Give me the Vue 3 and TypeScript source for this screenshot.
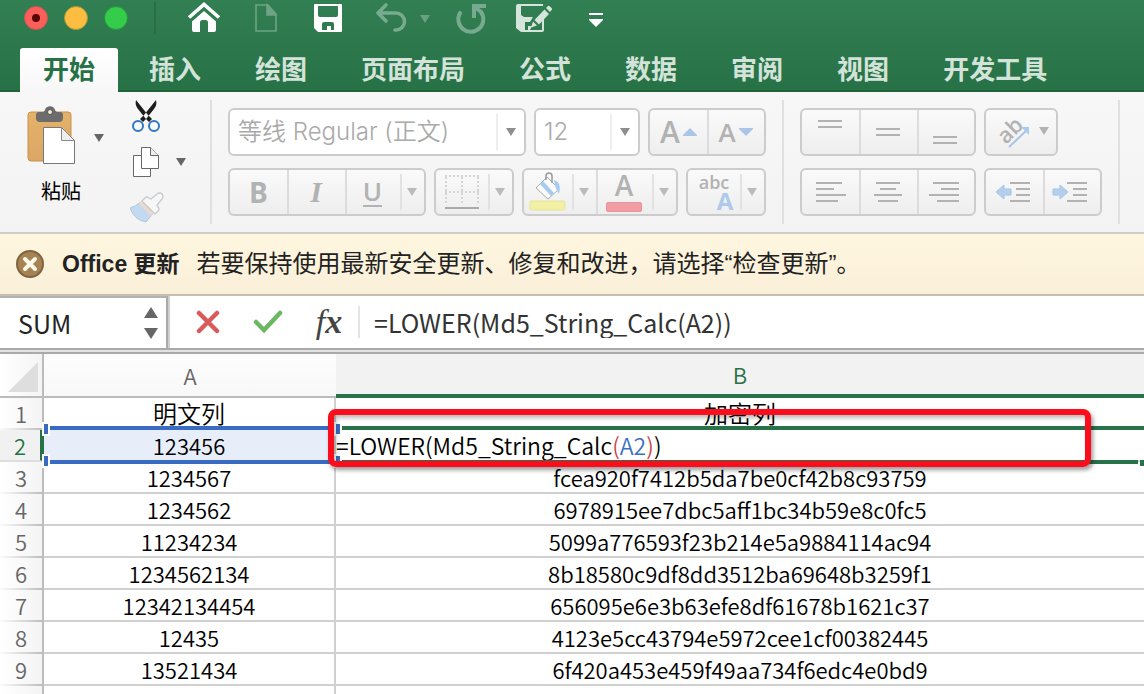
<script setup lang="ts">
import { ref } from 'vue'

interface SheetRow {
  n: number
  plain: string
  hash: string
}

const tabs: string[] = ['开始', '插入', '绘图', '页面布局', '公式', '数据', '审阅', '视图', '开发工具']
const activeTab = ref<string>('开始')

const fontName = ref<string>('等线 Regular (正文)')
const fontSize = ref<string>('12')
const cellName = ref<string>('SUM')
const formula = ref<string>('=LOWER(Md5_String_Calc(A2))')

const rows: SheetRow[] = [
  { n: 1, plain: '明文列', hash: '加密列' },
  { n: 2, plain: '123456', hash: '' },
  { n: 3, plain: '1234567', hash: 'fcea920f7412b5da7be0cf42b8c93759' },
  { n: 4, plain: '1234562', hash: '6978915ee7dbc5aff1bc34b59e8c0fc5' },
  { n: 5, plain: '11234234', hash: '5099a776593f23b214e5a9884114ac94' },
  { n: 6, plain: '1234562134', hash: '8b18580c9df8dd3512ba69648b3259f1' },
  { n: 7, plain: '12342134454', hash: '656095e6e3b63efe8df61678b1621c37' },
  { n: 8, plain: '12435', hash: '4123e5cc43794e5972cee1cf00382445' },
  { n: 9, plain: '13521434', hash: '6f420a453e459f49aa734f6edc4e0bd9' },
  { n: 10, plain: '', hash: '' },
]

const verticalAligns = [
  { label: '顶端对齐', y: 11 },
  { label: '垂直居中', y: 19 },
  { label: '底端对齐', y: 27 },
]

const horizontalAligns = [
  { label: '左对齐', lines: [[14, 40], [14, 32], [14, 44], [14, 36]] },
  { label: '居中', lines: [[16, 40], [20, 36], [14, 42], [18, 38]] },
  { label: '右对齐', lines: [[16, 42], [24, 42], [12, 42], [20, 42]] },
]
</script>

<template>
  <div class="app">
    <header class="top">
      <div class="titlebar">
        <div class="lights">
          <button class="light red" aria-label="关闭"><i></i></button>
          <button class="light yellow" aria-label="最小化"></button>
          <button class="light green" aria-label="缩放"></button>
        </div>
        <span class="title-sep"></span>
        <div class="quick">
          <button aria-label="主页">
            <svg width="40" height="36" fill="#fff"><path d="M5 17.5 20 4.5 35 17.5" fill="none" stroke="#fff" stroke-width="3.6" /><path d="M8 21.5 20 11 32 21.5V30q0 2-2 2h-6V22.500q0-2.500-2.500-2.500h-3q-2.500 0-2.500 2.500V32h-6q-2 0-2-2z" /></svg>
          </button>
          <button aria-label="新建">
            <svg width="40" height="36" fill="none" stroke="#6ea485" stroke-width="1.6"><path d="M10 5h12l8 9v17H10z" /><path d="M21 5v10h9z" fill="#6ea485" /></svg>
          </button>
          <button aria-label="保存">
            <svg width="40" height="36" fill="#fff" fill-rule="evenodd"><path d="M7 4h26q1 0 1 1v26q0 1-1 1H10l-4-4V5q0-1 1-1zM10 6v9q0 2 2 2h16q2 0 2-2V6zM14 30v-6q0-2 2-2h8q2 0 2 2v6h-3v-4h-4v4z" /></svg>
          </button>
          <div class="undo">
            <button aria-label="撤销">
              <svg width="40" height="36" fill="none" stroke="#78aa8f" stroke-width="3.600"><path d="M16 6 8 14l8 8M8 14h18a8.500 8.500 0 0 1 0 17h-1" stroke-linejoin="round" stroke-linecap="round" transform="translate(0 -1)" /></svg>
            </button>
            <button class="narrow" aria-label="撤销选项">
              <svg width="20" height="36" fill="#68a080"><path d="M10 15h10l-5 8z" /></svg>
            </button>
          </div>
          <button aria-label="重做">
            <svg width="40" height="36" fill="none" stroke="#78aa8f" stroke-width="4"><path d="M8 13A12.500 12.500 0 1 0 29 12L24 8" stroke-linecap="round" /><path d="M34 6H22v12" /></svg>
          </button>
          <button aria-label="另存为">
            <svg width="40" height="36"><path d="M4 4h25v2H7v9l3 2h9l-3 5h-5v8h3v-4h4l-2 4h12V20l2-2v12q0 2-2 2H7l-5-4V6q0-2 2-2z" fill="#d5e5dc" /><path d="m20.500 20 10-10.500 4.500 4.500-10 10.500zM32 8l2-2q1-.6 2 .4l1.600 1.600q1 1 0 2L36 12zM19 21.500l4 4-6 2z" fill="#d5e5dc" /></svg>
          </button>
          <button aria-label="自定义快速访问工具栏">
            <svg width="40" height="36" fill="#fff"><path d="M13 13h14v2H13zM13 19h14v1l-7 7-7-7z" /></svg>
          </button>
        </div>
      </div>
      <nav class="tabs" role="tablist">
        <button
          v-for="tab in tabs"
          :key="tab"
          role="tab"
          :aria-selected="tab === activeTab"
          :class="{ active: tab === activeTab }"
          @click="activeTab = tab"
        >{{ tab }}</button>
      </nav>
    </header>

    <section class="ribbon">
      <div class="clipboard">
        <button class="paste">
          <svg width="50" height="60">
            <defs><linearGradient id="board" x2="0" y2="1"><stop stop-color="#e4b26b" /><stop offset="1" stop-color="#dca765" /></linearGradient></defs>
            <rect x="1" y="7" width="43" height="49" rx="3" fill="url(#board)" stroke="#c8914c" />
            <path d="M12 7h4q1 0 2-2c1-5 9-5 10 0q1 2 2 2h3q3 0 3 3v3q0 4-4 4H13q-4 0-4-4v-3q0-3 3-3z" fill="#6c6c6c" />
            <circle cx="23" cy="7" r="2.500" fill="#f3e9db" stroke="#555" />
            <path d="M16.500 22.500h18l13 13v23h-31z" fill="#fff" stroke="#777" />
            <path d="M34.500 22.500v13h13z" fill="#eee" stroke="#888" />
          </svg>
          <span>粘贴</span>
        </button>
        <button class="drop-btn paste-drop" aria-label="粘贴选项"><svg width="10" height="8" fill="#666"><path d="M0 0h10L5 8z" /></svg></button>
        <div class="clip-tools">
          <button aria-label="剪切">
            <svg width="32" height="34"><path d="M6 0c-1 4 0 6 2 9l8 10 3 3 3-3-4-4zM26 0c1 4 0 6-2 9l-8 10-3 3-3-3 4-4z" fill="#1d1d1d" /><g fill="#f8fbff" stroke="#2f77c5" stroke-width="2"><circle cx="8" cy="26" r="5" /><circle cx="24" cy="26" r="5" /></g></svg>
          </button>
          <div class="copy-row">
            <button aria-label="复制">
              <svg width="32" height="34" fill="#fff" stroke="#686868"><path d="M3.500 10.500h17v21h-17z" /><path d="M11.500 2.500h9l8 8v13h-17z" /><path d="M20.500 2.500v8h8" fill="#eee" /></svg>
            </button>
            <button class="drop-btn" aria-label="复制选项"><svg width="10" height="8" fill="#666"><path d="M0 0h10L5 8z" /></svg></button>
          </div>
          <button aria-label="格式刷">
            <svg width="34" height="34"><path d="M0 18q6-2 11-6l12 12q-4 4-7 8Q4 30 0 18z" fill="#c3d9ef" stroke="#b3c7dd" /><path d="m9 14 3-3 12 12-3 3z" fill="#ead9d0" /><path d="m12 11 3-3q2-2 4 0l2 1 6-5q3-2 5 0t0 5l-5 6 1 2q2 2 0 4l-3 3z" fill="#f7f7f7" stroke="#c9c9c9" stroke-width="1.300" /></svg>
          </button>
        </div>
      </div>

      <div class="group">
        <div class="line">
          <div class="combo font-combo">
            <select v-model="fontName" aria-label="字体"><option>等线 Regular (正文)</option></select>
            <svg width="10" height="8" fill="#8e8e8e"><path d="M0 0h10L5 8z" /></svg>
          </div>
          <div class="combo size-combo">
            <select v-model="fontSize" aria-label="字号"><option>12</option></select>
            <svg width="10" height="8" fill="#8e8e8e"><path d="M0 0h10L5 8z" /></svg>
          </div>
          <div class="btns">
            <button class="w59 resize" aria-label="增大字号"><b class="letter big">A</b><svg width="14" height="8"><path d="M7 0 14 7v1H0V7z" fill="#a9c5e8" /></svg></button>
            <button class="w59 resize" aria-label="减小字号"><b class="letter small">A</b><svg width="14" height="8"><path d="M0 0h14v1L7 8 0 1z" fill="#a9c5e8" /></svg></button>
          </div>
        </div>
        <div class="line">
          <div class="btns">
            <button class="w59" aria-label="加粗"><b class="letter bold">B</b></button>
            <button class="w59" aria-label="倾斜"><i class="letter italic">I</i></button>
            <button class="w55" aria-label="下划线"><span class="letter under">U</span></button>
            <button class="drop" aria-label="下划线选项"><svg width="10" height="8"><path d="M0 0h10L5 8z" /></svg></button>
          </div>
          <div class="btns">
            <button class="w52" aria-label="边框">
              <svg width="36" height="36" fill="none"><path d="M1 2h34M1 18h34M2 3v28M18 3v28M34 3v28" stroke="#d4d4d4" stroke-width="2" stroke-dasharray="2 2" /><path d="M1 34h34" stroke="#aaa" stroke-width="2" /></svg>
            </button>
            <button class="drop" aria-label="边框选项"><svg width="10" height="8"><path d="M0 0h10L5 8z" /></svg></button>
          </div>
          <div class="btns">
            <button class="w48" aria-label="填充颜色">
              <svg width="38" height="42"><path d="m7 17 11-11 12 12-11 10z" fill="#fbfbfb" stroke="#aaa" /><path d="m11 13 11 12 3-3L14 10z" fill="#a9cbf0" /><path d="M25 9q8 2 5 14-3-5-4-8z" fill="#a9cbf0" /><path d="M17 9V5q0-3 3-3t3 3v7" fill="none" stroke="#999" stroke-width="1.500" /><rect x="1" y="30" width="35" height="9" rx="1" fill="#f1f0a5" stroke="#e5e49b" /></svg>
            </button>
            <button class="drop" aria-label="填充颜色选项"><svg width="10" height="8"><path d="M0 0h10L5 8z" /></svg></button>
            <button class="w56 split" aria-label="字体颜色">
              <span class="color-letter">A</span><span class="swatch"></span>
            </button>
            <button class="drop" aria-label="字体颜色选项"><svg width="10" height="8"><path d="M0 0h10L5 8z" /></svg></button>
          </div>
          <div class="btns">
            <button class="w52 phonetic" aria-label="显示拼音"><span>abc</span><b>A</b></button>
            <button class="drop" aria-label="拼音选项"><svg width="10" height="8"><path d="M0 0h10L5 8z" /></svg></button>
          </div>
        </div>
      </div>

      <div class="group">
        <div class="line">
          <div class="btns">
            <button v-for="v in verticalAligns" :key="v.label" class="w59" :aria-label="v.label">
              <svg width="57" height="44" stroke="#b2b2b2" stroke-width="2"><path :d="`M16 ${v.y}h24M16 ${v.y + 6}h24`" /></svg>
            </button>
          </div>
          <div class="btns">
            <button class="w70" aria-label="方向">
              <svg width="70" height="44"><text x="20" y="35" transform="rotate(-45 20 35)" class="ab">ab</text><path d="M23 37 41 20" stroke="#a9c5e6" stroke-width="2" /><path d="M35 17h8v8z" fill="#a9cbee" /><path d="M53 17h10l-5 8z" fill="#b2b2b2" /></svg>
            </button>
          </div>
        </div>
        <div class="line">
          <div class="btns">
            <button v-for="h in horizontalAligns" :key="h.label" class="w59" :aria-label="h.label">
              <svg width="57" height="44" stroke="#b2b2b2" stroke-width="2"><path v-for="(l, i) in h.lines" :key="i" :d="`M${l[0]} ${13 + i * 6}H${l[1]}`" /></svg>
            </button>
          </div>
          <div class="btns">
            <button class="w59" aria-label="减少缩进量">
              <svg width="57" height="44"><path d="m10 22 8-7v4h7v6h-7v4z" fill="#b4cfee" stroke="#a7c3e4" /><path d="M24 13h20M30 19h14M30 25h14M24 31h20" stroke="#b2b2b2" stroke-width="2" /></svg>
            </button>
            <button class="w59" aria-label="增加缩进量">
              <svg width="57" height="44"><path d="m25 22-8-7v4h-7v6h7v4z" fill="#b4cfee" stroke="#a7c3e4" /><path d="M24 13h20M30 19h14M30 25h14M24 31h20" stroke="#b2b2b2" stroke-width="2" /></svg>
            </button>
          </div>
        </div>
      </div>
      <div class="group rest"></div>
    </section>

    <aside class="notice">
      <button aria-label="关闭提示">
        <svg width="28" height="28"><circle cx="14" cy="14" r="13" fill="#a58355" stroke="#80643d" stroke-width="2" /><path d="m9 9 10 10M19 9 9 19" stroke="#fff8e6" stroke-width="4" stroke-linecap="round" /></svg>
      </button>
      <strong>Office 更新</strong>
      <span>若要保持使用最新安全更新、修复和改进，请选择“检查更新”。</span>
    </aside>

    <section class="formula-bar">
      <div class="name-box">
        <input v-model="cellName" aria-label="名称框" />
        <div class="stepper">
          <button aria-label="上一个"><svg width="14" height="12" fill="#666"><path d="M7 1 14 12H0z" /></svg></button>
          <button aria-label="下一个"><svg width="14" height="12" fill="#666"><path d="M0 0h14L7 11z" /></svg></button>
        </div>
      </div>
      <button class="fx-btn" aria-label="取消"><svg width="24" height="24" stroke="#da5a5c" stroke-width="4.500"><path d="m3 3 18 18M21 3 3 21" stroke-linecap="round" /></svg></button>
      <button class="fx-btn" aria-label="输入"><svg width="30" height="24" fill="none" stroke="#6bb862" stroke-width="4.500"><path d="m3 12 8 8L27 3" stroke-linecap="round" /></svg></button>
      <button class="fx-btn fx" aria-label="插入函数"><i>f</i><i class="x">x</i></button>
      <input v-model="formula" class="formula" aria-label="编辑栏" />
    </section>

    <main class="sheet">
      <table>
        <colgroup><col class="c-num" /><col class="c-a" /><col /></colgroup>
        <thead>
          <tr>
            <th class="corner" aria-label="全选"><svg width="42" height="42"><path d="M38 8v30H8z" fill="#dedede" /></svg></th>
            <th>A</th>
            <th class="current">B</th>
          </tr>
        </thead>
        <tbody>
          <tr v-for="row in rows" :key="row.n" :class="{ editing: row.n === 2, titles: row.n === 1 }">
            <th scope="row">{{ row.n }}</th>
            <td>{{ row.plain }}<template v-if="row.n === 2"><i class="h tl"></i><i class="h tr"></i><i class="h bl"></i><i class="h br"></i></template></td>
            <td v-if="row.n === 2" class="edit">=LOWER(Md5_String_Calc<span class="paren">(</span><span class="refer">A2</span><span class="paren">)</span>)<i class="fill-handle"></i></td>
            <td v-else>{{ row.hash }}</td>
          </tr>
        </tbody>
      </table>
      <div class="highlight"></div>
    </main>
  </div>
</template>

<style>
html, body { margin: 0; background: #fff; }
</style>

<style scoped>
.app { height: 100vh; display: flex; flex-direction: column; overflow: hidden; font-family: 'Liberation Sans', 'Noto Sans CJK SC', sans-serif; color: #000; }
.app *, .app *::before, .app *::after { box-sizing: border-box; }
button { padding: 0; border: 0; background: none; font: inherit; color: inherit; display: flex; align-items: center; justify-content: center; }
svg { display: block; flex: none; }
input, select { font: inherit; color: inherit; border: 0; background: none; outline: 0; min-width: 0; }

.top { background: linear-gradient(#337f54, #267145); border-bottom: 2px solid #1f6439; flex: none; height: 92px; }
.titlebar { display: flex; height: 48px; padding-left: 24px; align-items: flex-start; }
.lights { display: flex; gap: 16px; padding-top: 6px; }
.light { width: 24px; height: 24px; border-radius: 50%; border: 1px solid; }
.red { background: #fc5f5b; border-color: #c25a4c; }
.red i { width: 8px; height: 8px; border-radius: 50%; background: #5c0404; }
.yellow { background: #fdbd40; border-color: #a89a3c; }
.green { background: #35cb4b; border-color: #23983b; }
.title-sep { width: 2px; height: 32px; margin: 2px 28px 0 26px; background: #2a6d46; }
.quick { display: flex; gap: 22px; }
.quick button { width: 40px; height: 36px; }
.undo { display: flex; }
.quick .narrow { width: 20px; }
.tabs { display: flex; gap: 8px; padding-left: 20px; height: 44px; }
.tabs button { padding: 0 23px 4px; height: 44px; font: 700 26px/40px 'Noto Sans CJK SC', sans-serif; color: #d3e3d9; border-radius: 3px 3px 0 0; white-space: nowrap; }
.tabs .active { background: linear-gradient(#fff, #f7f7f7); color: #267145; }

.ribbon { flex: none; display: flex; padding: 8px 0; background: linear-gradient(#f7f7f7, #f3f3f3); border-bottom: 2px solid #cfcdcb; }
.clipboard { width: 210px; flex: none; display: flex; align-items: flex-start; padding-left: 26px; }
.paste { flex-direction: column; width: 70px; padding-top: 5px; align-items: center; font: 20px/28px 'Noto Sans CJK SC', sans-serif; }
.paste svg { align-self: flex-start; margin-left: 1px; }
.paste span { margin-top: 12px; }
.drop-btn { width: 14px; height: 24px; }
.paste-drop { margin: 26px 0 0 -4px; }
.clip-tools { display: flex; flex-direction: column; gap: 11px; margin-left: 24px; align-items: flex-start; }
.copy-row { display: flex; align-items: center; gap: 12px; }
.group { flex: none; display: flex; flex-direction: column; gap: 12px; padding: 8px 16px; border-left: 2px solid #e0e0e0; }
.rest { flex: 1; }
.line { display: flex; gap: 8px; }
.combo { position: relative; height: 48px; display: flex; background: #fff; border: 2px solid #ccc; border-radius: 6px; }
.combo select { appearance: none; width: 100%; padding: 0 32px 0 8px; font: 24px/44px Inter, 'Noto Sans CJK SC', sans-serif; font-weight: 350; color: #aaa; }
.combo svg { position: absolute; right: 8px; top: 18px; }
.combo::after { content: ''; position: absolute; right: 26px; top: 4px; bottom: 4px; width: 2px; background: #eee; }
.font-combo { width: 298px; }
.size-combo { width: 106px; }
.btns { height: 48px; display: flex; border: 2px solid #ccc; border-radius: 6px; background: linear-gradient(#fafafa, #eee); }
.btns button { height: 44px; flex: none; position: relative; }
.btns button + button::before { content: ''; position: absolute; left: 0; top: 0; bottom: 0; width: 2px; background: #dcdcdc; }
.btns .drop::before { top: 4px; bottom: 4px; background: #e2e2e2; }
.btns .drop { width: 24px; }
.drop path { fill: #bbb; }
.w59 { width: 57px; }
.w59 + .w59 { width: 58px; }
.w59 + .w59:last-child { width: 57px; }
.w55 { width: 55px; }
.w52 { width: 52px; }
.w48 { width: 48px; }
.w56 { width: 56px; }
.w70 { width: 70px; }
.btns .split { flex-direction: column; }
.resize { gap: 3px; }
.letter { font: 600 28px/44px 'Open Sans', sans-serif; color: #b2b2b2; }
.letter.big { font-size: 30px; }
.letter.small { font-size: 26px; }
.letter.bold { font-weight: 700; }
.letter.italic { font: italic 700 30px/44px 'Liberation Serif', serif; }
.letter.under { font-size: 26px; line-height: 28px; border-bottom: 2px solid #b2b2b2; }
.color-letter { font: 600 28px/26px 'Open Sans', sans-serif; color: #b2b2b2; }
.swatch { width: 36px; height: 10px; border-radius: 2px; background: #f29da4; border: 1px solid #e6949b; margin-top: 4px; }
.btns .phonetic { flex-direction: column; font: 600 18px/18px 'Open Sans', sans-serif; color: #b2b2b2; }
.phonetic b { font: 700 24px/20px 'Open Sans', sans-serif; color: #afc9ea; margin-left: 22px; }
.ab { font: 600 22px 'Open Sans', sans-serif; fill: #b2b2b2; }

.notice { flex: none; display: flex; align-items: center; height: 60px; padding: 0 16px; background: linear-gradient(#fff6e0, #faf0da); font-size: 24px; line-height: 36px; color: #222; white-space: nowrap; }
.notice strong { margin: 0 17px 0 18px; font-size: 23px; }

.formula-bar { flex: none; display: flex; align-items: center; height: 56px; border-top: 2px solid #c5beae; border-bottom: 2px solid #aaa; background: #fff; }
.name-box { display: flex; align-items: center; align-self: stretch; width: 168px; margin-right: 2px; border-top: 2px solid #b2b2b2; border-right: 2px solid #aaa; box-shadow: 2px 0 #d0d0d0; padding: 0 8px 0 18px; flex: none; }
.name-box input { flex: 1; padding: 0; font: 25px/36px 'Noto Sans CJK SC', sans-serif; color: #222; }
.stepper { display: flex; flex-direction: column; gap: 10px; }
.fx-btn { height: 40px; width: 30px; margin-left: 30px; flex: none; }
.fx-btn:first-of-type { margin-left: 23px; }
.fx { font: italic 34px/36px 'Liberation Serif', serif; color: #444; width: 32px; }
.fx i { font-weight: 400; }
.fx .x { font-weight: 700; }
.formula { flex: 1; height: 32px; margin-left: 13px; padding: 0 0 0 14px; border-left: 2px solid #e4e4e4; font: 25px/32px 'Noto Sans CJK SC', sans-serif; color: #333; }

.sheet { flex: 1; min-height: 0; overflow: hidden; position: relative; border-top: 2px solid #e2e2e2; font: 22px/30px 'Noto Sans CJK SC', sans-serif; }
table { width: 100%; table-layout: fixed; border-collapse: separate; border-spacing: 0; border-top: 2px solid #aaa; }
.c-num { width: 44px; }
.c-a { width: 292px; }
th { font-weight: 350; color: #666; padding: 0; }
thead th { height: 44px; background: linear-gradient(#fdfdfd, #f8f8f8); border-bottom: 2px solid #bbb; line-height: 42px; }
thead .corner { border-right: 2px solid #bbb; background: linear-gradient(90deg, #fff, #f4f4f4); }
thead .current { background: #f2f2f2; border-bottom: 4px solid #28724a; color: #267145; line-height: 40px; }
tbody th { height: 32px; border-right: 2px solid #bbb; border-bottom: 2px solid; border-image: linear-gradient(90deg, #fff, #bbb) 2; background: linear-gradient(90deg, #fff, #f4f4f4); }
td { position: relative; height: 32px; padding: 0; text-align: center; border-right: 2px solid #d0d0d0; border-bottom: 2px solid #d0d0d0; white-space: nowrap; font-weight: 350; }
td:last-child { border-right: 0; }
.titles td { font-size: 24px; }
.editing th { color: #267145; background: #f1f1f1; border-image: none; border-bottom-color: #ddd; border-right: 4px solid #267145; }
.editing td:nth-child(2) { background: #e8eef9; }
.editing td::before, .editing td::after { content: ''; position: absolute; left: 6px; right: 4px; height: 4px; background: #386bc1; }
.editing td::before { top: -4px; }
.editing td::after { bottom: -4px; }
.editing .edit { text-align: left; font-size: 23px; }
.editing .edit::before { right: 0; }
.editing .edit::before, .editing .edit::after { background: #28724a; }
.editing .edit::after { right: 6px; }
.h { position: absolute; width: 4px; height: 10px; background: #386bc1; box-shadow: 0 0 0 2px #fff; z-index: 1; }
.tl { left: 0; top: -6px; }
.bl { left: 0; bottom: -6px; }
.tr { right: -6px; top: -6px; }
.br { right: -6px; bottom: -6px; }
.paren { color: #c8454d; }
.refer { color: #3d6fc4; }
.fill-handle { position: absolute; right: 0; bottom: -6px; width: 4px; height: 6px; background: #28724a; }
.highlight { position: absolute; left: 328px; right: 53px; top: 57px; height: 58px; border: 6px solid #fb0d1c; border-radius: 8px; box-shadow: 2px 3px 4px #0006, inset 2px 3px 4px #0004; pointer-events: none; z-index: 2; }
</style>
